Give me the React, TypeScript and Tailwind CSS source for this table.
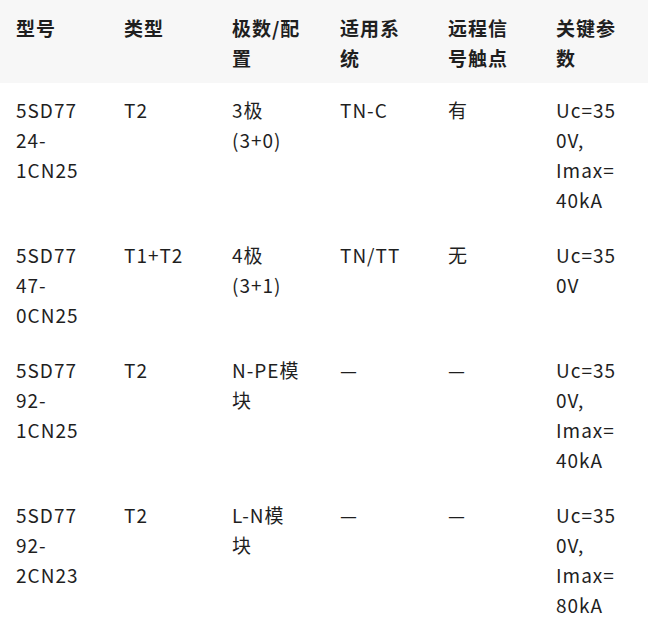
// each cell is given as its wrapped lines, so the breaks match the screenshot
const headers: string[][] = [
  ['型号'],
  ['类型'],
  ['极数/配', '置'],
  ['适用系', '统'],
  ['远程信', '号触点'],
  ['关键参', '数'],
];

const rows: string[][][] = [
  [['5SD77', '24-', '1CN25'], ['T2'], ['3极', '(3+0)'], ['TN-C'], ['有'], ['Uc=35', '0V,', 'Imax=', '40kA']],
  [['5SD77', '47-', '0CN25'], ['T1+T2'], ['4极', '(3+1)'], ['TN/TT'], ['无'], ['Uc=35', '0V']],
  [['5SD77', '92-', '1CN25'], ['T2'], ['N-PE模', '块'], ['—'], ['—'], ['Uc=35', '0V,', 'Imax=', '40kA']],
  [['5SD77', '92-', '2CN23'], ['T2'], ['L-N模', '块'], ['—'], ['—'], ['Uc=35', '0V,', 'Imax=', '80kA']],
];

function Lines({ lines }: { lines: string[] }) {
  return (
    <>
      {lines.map((l, i) => (
        <div key={i} className="whitespace-nowrap">
          {l}
        </div>
      ))}
    </>
  );
}

export default function App() {
  return (
    <div
      className="w-[654px] bg-white text-[#1f1f1f]"
      style={{ fontFamily: '"Noto Sans CJK SC", "Noto Sans", sans-serif' }}
    >
      <table className="w-[648px] table-fixed border-collapse text-[19px] leading-[30px] tracking-[1px]">
        <thead>
          <tr className="bg-[#f7f7f7]">
            {headers.map((h, i) => (
              <th key={i} className="w-[108px] pl-4 pr-2 pt-[13px] pb-[10px] text-left align-top font-bold">
                <Lines lines={h} />
              </th>
            ))}
          </tr>
        </thead>
        <tbody>
          {rows.map((r, ri) => (
            <tr key={ri}>
              {r.map((c, i) => (
                <td key={i} className="w-[108px] pl-4 pr-2 pt-3 pb-[13px] align-top">
                  <Lines lines={c} />
                </td>
              ))}
            </tr>
          ))}
        </tbody>
      </table>
    </div>
  );
}
